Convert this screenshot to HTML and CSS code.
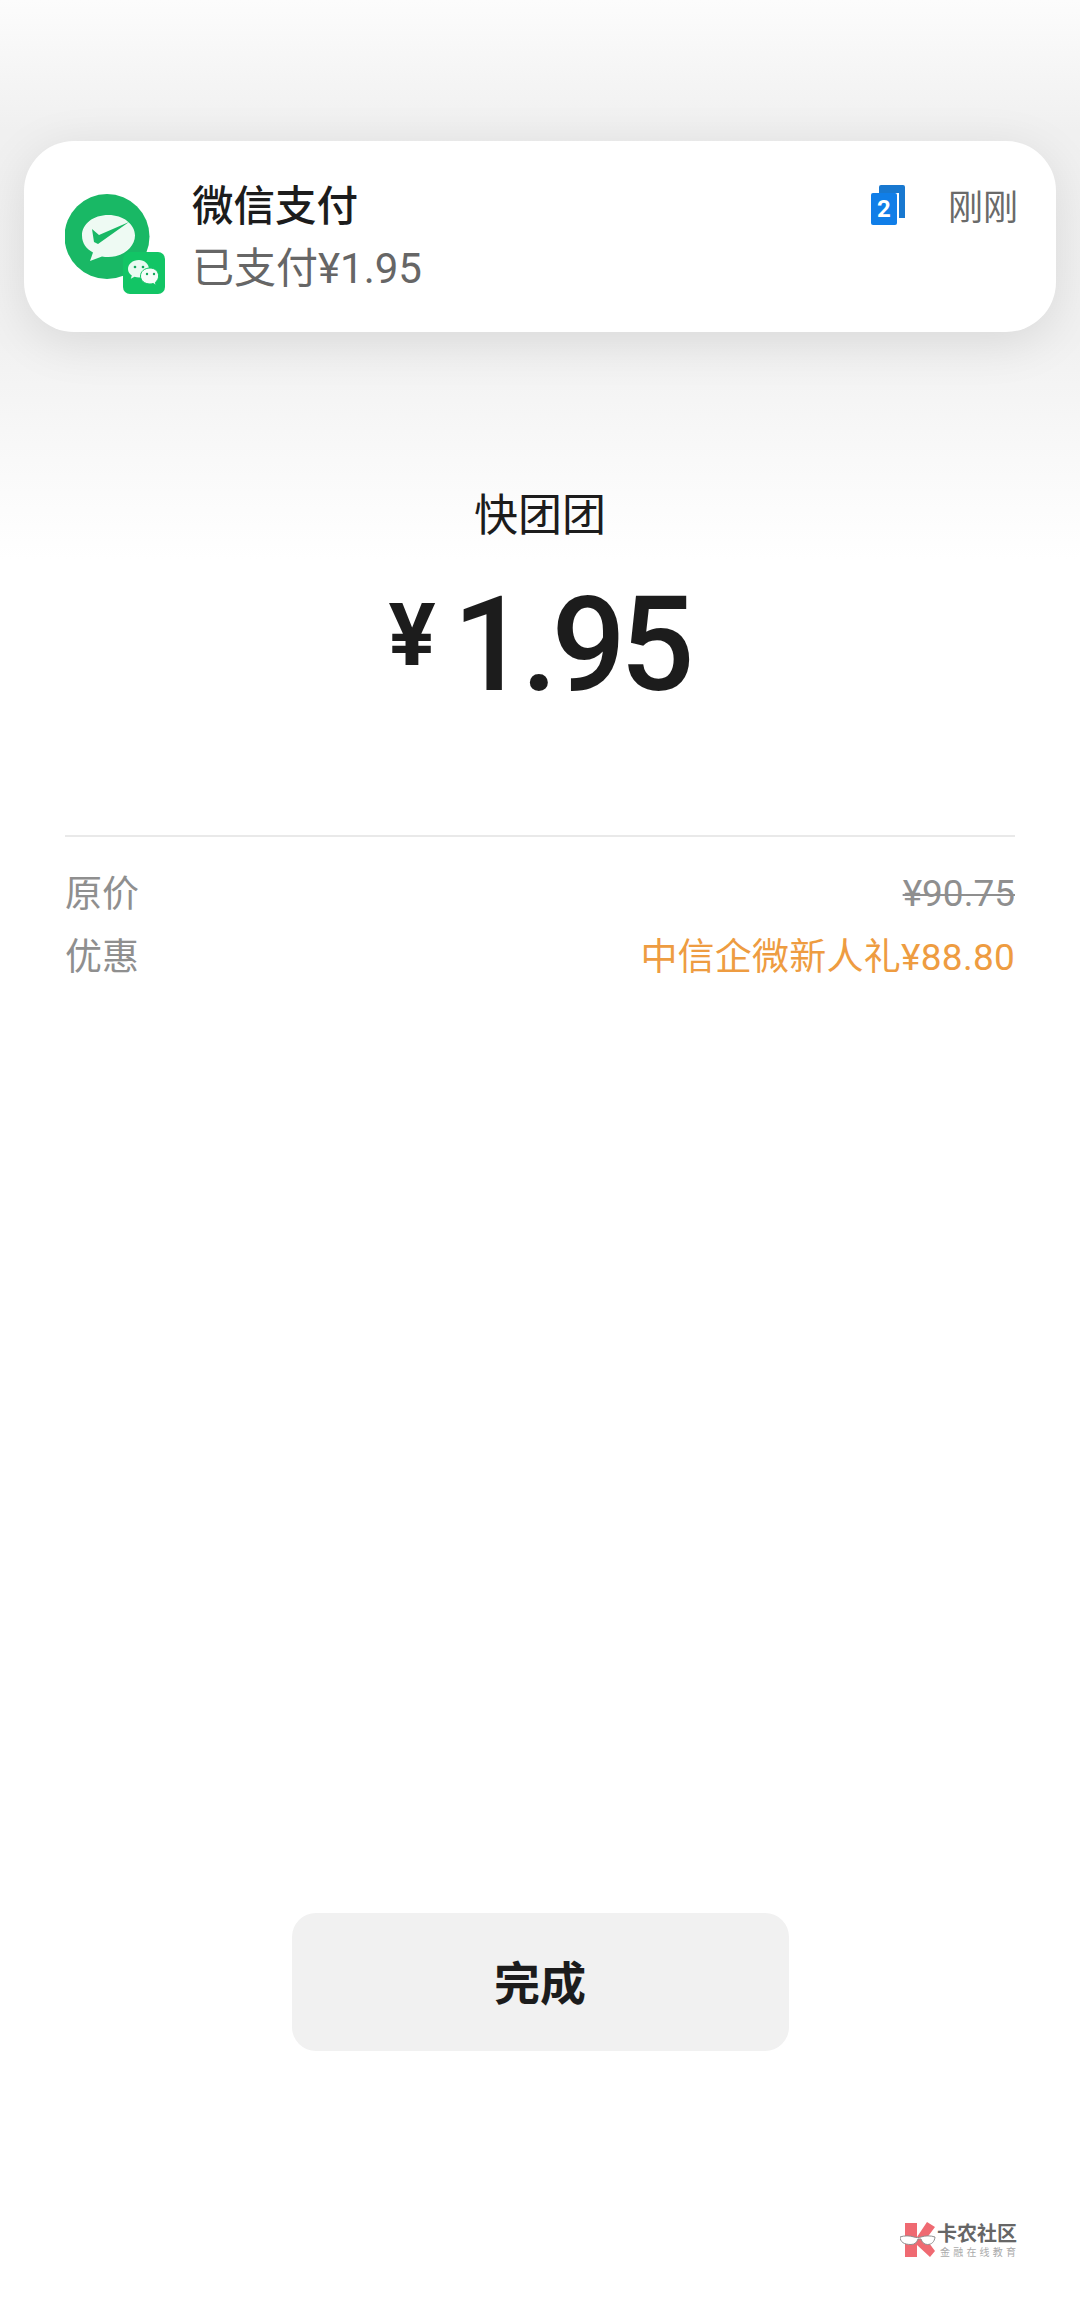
FILE: index.html
```html
<!DOCTYPE html>
<html lang="zh-CN">
<head>
<meta charset="utf-8">
<title>支付结果</title>
<link rel="stylesheet" href="styles.css">
</head>
<body>
<main class="page">
  <section class="summary">
    <div class="merchant">快团团</div>
    <div class="amount"><span class="currency">¥</span><span class="value">1.95</span></div>
  </section>
  <section class="details">
    <div class="row"><span>原价</span><s class="original">¥90.75</s></div>
    <div class="row"><span>优惠</span><span class="discount">中信企微新人礼¥88.80</span></div>
  </section>
  <button class="done">完成</button>
</main>

<aside class="notice">
  <div class="notice-icon">
    <svg width="100" height="102" viewBox="0 0 100 102">
      <circle cx="42" cy="42.500" r="42.500" fill="#19b865"/>
      <path d="M43.500 21C28 21 17 30 17 41.500c0 8 4.500 13.500 11 17l-3 8.500 12-4.500c2 .4 4 .5 6.500.5C58 63 70 53 70 41.500 70 30 58 21 43.500 21z" fill="#eefaf3"/>
      <path d="M27 35l7 6 30-13-31 22-4-2z" fill="#19b865"/>
      <rect x="58" y="58" width="42" height="42" rx="7" fill="#12c565"/>
      <path d="M74 66c-6.500 0-11 4-11 9 0 2.800 1.500 5 3.800 6.500l-1 3.300 3.700-2c1.500.4 3 .6 4.500.6 6 0 10-4 10-8.400 0-5-4.500-9-10-9z" fill="#e9fbf1"/>
      <path d="M85 74c-5.500 0-9.500 3.600-9.500 8s4 8 9.500 8c1 0 2.200-.2 3.200-.5l3 1.800-.8-3c2-1.500 3.200-3.700 3.200-6.300 0-4.400-3.500-8-8.600-8z" fill="#f4fdf8" stroke="#12c565" stroke-width="1"/>
      <circle cx="70" cy="73" r="1.300" fill="#12a85c"/><circle cx="78" cy="73" r="1.300" fill="#12a85c"/>
      <circle cx="82" cy="80" r="1.200" fill="#12a85c"/><circle cx="89" cy="80" r="1.200" fill="#12a85c"/>
    </svg>
  </div>
  <div class="notice-text">
    <div class="notice-title">微信支付</div>
    <div class="notice-body">已支付¥1.95</div>
  </div>
  <div class="notice-meta">
    <span class="stack">
      <svg class="stack-back" width="26" height="33" viewBox="0 0 26 33"><path d="M2 0h22a2 2 0 0 1 2 2v31h-6V8H0V2a2 2 0 0 1 2-2z" fill="#1878d0"/></svg>
      <span class="stack-count">2</span>
    </span>
    <span class="notice-time">刚刚</span>
  </div>
</aside>

<aside class="mark">
  <svg width="36" height="36" viewBox="0 0 36 36">
    <path d="M5 1h12v14L27 0l8 5-9 12 9 12-5 6-13-12v12H5z" fill="#ef6a72"/>
    <path d="M0 15c4-1.500 10-1.500 14 0 2 .8 5 .8 7 0 4-1.500 10-1.500 14 0-.5 5-3.500 7.500-7.500 7.500-3.500 0-5.500-2.500-6.500-5.500h-3c-1 3-3 5.500-7 5.500C3.500 22.500.5 20 0 15z" fill="#fff" stroke="#8f8f8f" stroke-width="1"/>
  </svg>
  <div class="mark-text">
    <div class="mark-name">卡农社区</div>
    <div class="mark-tag">金融在线教育</div>
  </div>
</aside>
</body>
</html>
```
FILE: styles.css
```css
* { box-sizing: border-box; }

html, body {
  margin: 0;
  height: 2310px;
  background: #fff;
}

body {
  position: relative;
  overflow: hidden;
  font-family: "Roboto", "Noto Sans CJK SC", sans-serif;
  color: #1c1c1c;
}

.page {
  height: 2310px;
  display: flex;
  flex-direction: column;
  padding: 486px 65px 0;
  background: linear-gradient(180deg, #fcfcfc 0, #f0f0f0 130px, #f1f1f1 340px, #f9f9f9 460px, #ffffff 560px);
}

.summary {
  display: flex;
  flex-direction: column;
  align-items: center;
}

.merchant {
  font-size: 44px;
  line-height: 60px;
}

.amount {
  display: flex;
  align-items: baseline;
  gap: 17px;
  margin-top: 34px;
  height: 130px;
  line-height: 130px;
}

.currency {
  font-size: 88px;
  font-weight: 700;
  position: relative;
  top: -25px;
}

.value {
  font-size: 131px;
  font-weight: 500;
  letter-spacing: -6px;
  margin-right: 3px;
}

.details {
  margin-top: 125px;
  padding-top: 28px;
  border-top: 2px solid #e9e9e9;
  display: flex;
  flex-direction: column;
  gap: 12px;
}

.row {
  display: flex;
  justify-content: space-between;
  align-items: center;
  height: 51px;
  font-size: 37px;
  color: #8f8f8f;
}

.discount {
  color: #ee9c41;
  letter-spacing: .25px;
}

.original {
  padding-top: 5px;
  text-decoration-thickness: 2px;
}

.done {
  align-self: center;
  width: 497px;
  height: 138px;
  margin-top: 934px;
  padding: 0 0 5px;
  border: 0;
  border-radius: 24px;
  background: #f1f1f1;
  color: #1c1c1c;
  font-family: inherit;
  font-size: 46px;
  font-weight: 700;
}

/* Heads-up notification floating above the page */
.notice {
  position: absolute;
  left: 24px;
  top: 141px;
  width: 1032px;
  height: 191px;
  display: flex;
  padding: 53px 38px 0 41px;
  background: #fff;
  border-radius: 50px;
  box-shadow: 0 10px 50px rgba(0, 0, 0, .1);
}

.notice-icon {
  width: 127px;
  height: 102px;
  flex: none;
}

.notice-icon svg { display: block; }

.notice-text {
  flex: 1;
  margin-top: -17px;
}

.notice-title {
  font-size: 41.5px;
  line-height: 60px;
  font-weight: 500;
}

.notice-body {
  font-size: 42px;
  line-height: 60px;
  margin-top: 2px;
  color: #666;
}

.notice-meta {
  display: flex;
  align-items: flex-start;
  gap: 43px;
  margin-top: -13px;
}

.stack {
  position: relative;
  width: 34px;
  height: 40px;
  margin-top: 4px;
}

.stack-back {
  position: absolute;
  left: 8px;
  top: 0;
}

.stack-count {
  position: absolute;
  left: 0;
  top: 8px;
  width: 26px;
  height: 32px;
  border-radius: 2px;
  background: #107ee8;
  color: #fff;
  font-size: 24px;
  font-weight: 700;
  line-height: 32px;
  text-align: center;
}

.notice-time {
  font-size: 35px;
  line-height: 50px;
  margin-top: 3px;
  color: #6a6a6a;
}

/* Forum watermark in the lower corner */
.mark {
  position: absolute;
  left: 900px;
  top: 2222px;
  display: flex;
  gap: 1px;
}

.mark-name {
  font-size: 20px;
  line-height: 24px;
  font-weight: 700;
  color: #666;
}

.mark-tag {
  font-size: 10px;
  line-height: 12px;
  margin: 1px 0 0 3px;
  letter-spacing: 3.2px;
  color: #aaa;
}
```
